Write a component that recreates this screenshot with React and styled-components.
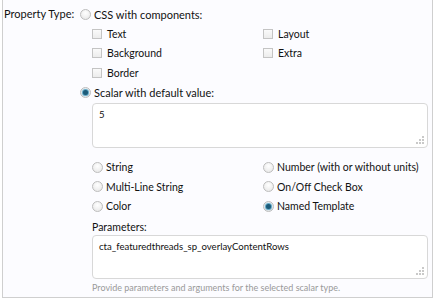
import React from 'react'
import styled, { createGlobalStyle } from 'styled-components'

const GlobalStyle = createGlobalStyle`
  body {
    margin: 0;
    background: #ffffff;
  }
`

const Panel = styled.div`
  box-sizing: border-box;
  width: 431px;
  height: 298px;
  margin-left: 2px;
  border: 1px solid #cfcfcf;
  border-top: none;
  background: #fcfcff;
  font-family: 'Lato', 'Liberation Sans', sans-serif;
  font-size: 11px;
  color: #111111;
  display: grid;
  grid-template-columns: 77px 1fr;
  padding-top: 4px;
`

const Label = styled.div`
  padding-left: 1px;
  line-height: 20px;
`

const Fields = styled.div`
  padding-right: 4px;
`

const Option = styled.label`
  display: flex;
  align-items: center;
  gap: 3px;
  height: ${p => p.$h || 20}px;
`

const Radio = styled.span`
  box-sizing: border-box;
  width: 11px;
  height: 11px;
  border-radius: 50%;
  border: 1px solid #bdbdbd;
  background: radial-gradient(circle at 50% 35%, #ffffff 0%, #e4e4e4 100%);
  display: flex;
  align-items: center;
  justify-content: center;

  &::after {
    content: '';
    width: 5px;
    height: 5px;
    border-radius: 50%;
    background: ${p => (p.$checked ? '#1c5a78' : 'transparent')};
    box-shadow: ${p => (p.$checked ? '0 0 1px 1px #4f9ec0' : 'none')};
  }
`

const Box = styled.span`
  box-sizing: border-box;
  width: 10px;
  height: 10px;
  border: 1px solid #c4c4c4;
  background: linear-gradient(#fafafa, #ececec);
  margin-right: 2px;
`

const Indent = styled.div`
  margin-left: 12px;
  font-size: 10.5px;
`

const TwoCols = styled.div`
  display: grid;
  grid-template-columns: 171px 1fr;
  margin-top: ${p => p.$mt || 0}px;
`

const TextBox = styled.div`
  position: relative;
  box-sizing: border-box;
  height: ${p => p.$h}px;
  background: #ffffff;
  border: 1px solid #d8d8d8;
  border-radius: 4px;
  padding: 5px 6px;
  font-size: 9.6px;
  color: #111;
`

const Grip = styled.svg`
  position: absolute;
  right: 3px;
  bottom: 3px;
`

const Caption = styled.div`
  line-height: 16px;
  margin-top: ${p => p.$mt || 0}px;
`

const Hint = styled.div`
  color: #9a9a9a;
  font-size: 9px;
  line-height: 16px;
  margin-top: 1px;
`

function ResizeGrip() {
  return (
    <Grip width="8" height="8" viewBox="0 0 8 8">
      <rect x="6" y="0" width="2" height="2" fill="#c9c9c9" />
      <rect x="3" y="3" width="2" height="2" fill="#c9c9c9" />
      <rect x="6" y="3" width="2" height="2" fill="#c9c9c9" />
      <rect x="0" y="6" width="2" height="2" fill="#c9c9c9" />
      <rect x="3" y="6" width="2" height="2" fill="#c9c9c9" />
      <rect x="6" y="6" width="2" height="2" fill="#c9c9c9" />
    </Grip>
  )
}

function Check({ children }) {
  return (
    <Option $h={19.5}>
      <Box />
      {children}
    </Option>
  )
}

function Choice({ checked, children, h }) {
  return (
    <Option $h={h}>
      <Radio $checked={checked} />
      {children}
    </Option>
  )
}

export default function App() {
  return (
    <>
      <GlobalStyle />
      <Panel>
        <Label>Property Type:</Label>
        <Fields>
          <Choice>CSS with components:</Choice>
          <Indent>
            <TwoCols>
              <Check>Text</Check>
              <Check>Layout</Check>
              <Check>Background</Check>
              <Check>Extra</Check>
              <Check>Border</Check>
            </TwoCols>
          </Indent>
          <Choice checked>Scalar with default value:</Choice>
          <Indent>
            <TextBox $h={45}>
              5
              <ResizeGrip />
            </TextBox>
            <TwoCols $mt={10}>
              <Choice h={19.5}>String</Choice>
              <Choice h={19.5}>Number (with or without units)</Choice>
              <Choice h={19.5}>Multi-Line String</Choice>
              <Choice h={19.5}>On/Off Check Box</Choice>
              <Choice h={19.5}>Color</Choice>
              <Choice h={19.5} checked>Named Template</Choice>
            </TwoCols>
            <Caption $mt={3}>Parameters:</Caption>
            <TextBox $h={44}>
              cta_featuredthreads_sp_overlayContentRows
              <ResizeGrip />
            </TextBox>
            <Hint>Provide parameters and arguments for the selected scalar type.</Hint>
          </Indent>
        </Fields>
      </Panel>
    </>
  )
}
